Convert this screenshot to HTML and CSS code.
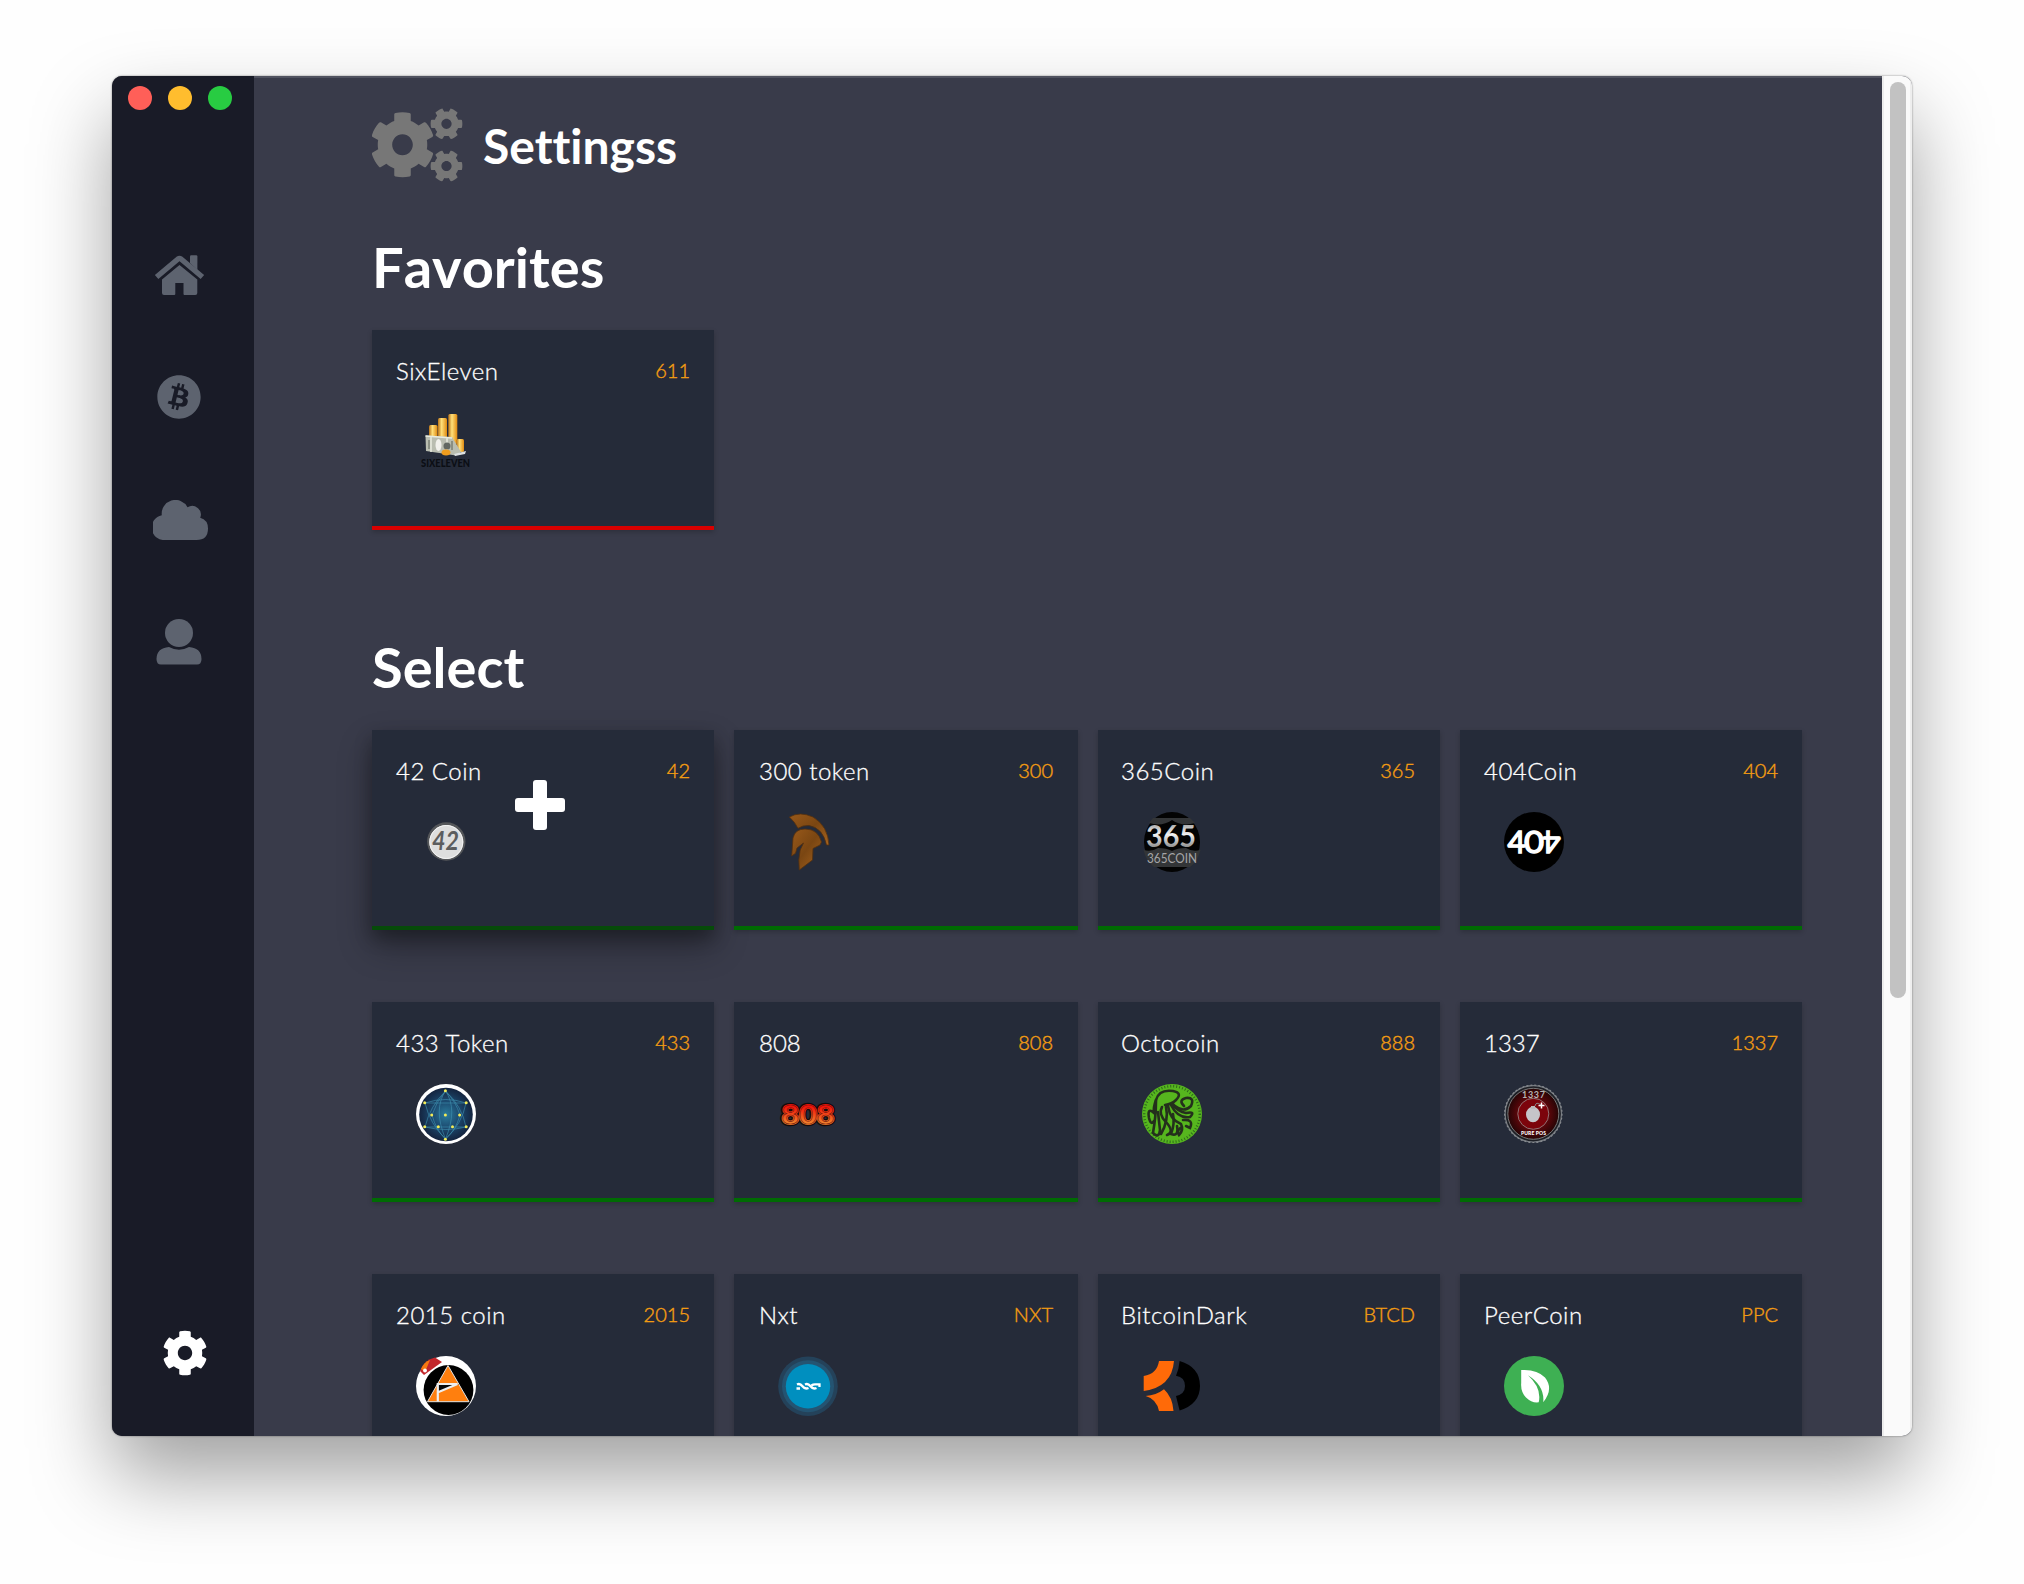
FILE: index.html
```html
<!DOCTYPE html>
<html lang="en">
<head>
<meta charset="utf-8">
<title>Settings</title>
<link rel="stylesheet" href="styles.css">
</head>
<body>
<svg class="defs" width="0" height="0">
  <defs>
    <path id="cog" d="M487.4 315.7l-42.6-24.6c4.3-23.2 4.3-47 0-70.2l42.6-24.6c4.9-2.8 7.1-8.6 5.5-14-11.1-35.6-30-67.8-54.7-94.6-3.8-4.1-10-5.1-14.8-2.3L380.8 110c-17.9-15.4-38.5-27.3-60.8-35.1V25.8c0-5.6-3.9-10.5-9.4-11.7-36.7-8.2-74.3-7.8-109.2 0-5.5 1.2-9.4 6.1-9.4 11.7V75c-22.2 7.9-42.8 19.8-60.8 35.1L88.7 85.5c-4.9-2.8-11-1.9-14.8 2.3-24.7 26.7-43.6 58.9-54.7 94.6-1.7 5.4.6 11.2 5.5 14L67.3 221c-4.3 23.2-4.3 47 0 70.2l-42.6 24.6c-4.9 2.8-7.1 8.6-5.5 14 11.1 35.6 30 67.8 54.7 94.6 3.8 4.1 10 5.1 14.8 2.3l42.6-24.6c17.9 15.4 38.5 27.3 60.8 35.1v49.2c0 5.6 3.9 10.5 9.4 11.7 36.7 8.2 74.3 7.8 109.2 0 5.5-1.2 9.4-6.1 9.4-11.7v-49.2c22.2-7.9 42.8-19.8 60.8-35.1l42.6 24.6c4.9 2.8 11 1.9 14.8-2.3 24.7-26.7 43.6-58.9 54.7-94.6 1.5-5.5-.7-11.3-5.6-14.1zM256 336c-44.1 0-80-35.9-80-80s35.9-80 80-80 80 35.9 80 80-35.9 80-80 80z"/>
    <linearGradient id="gold"><stop offset="0" stop-color="#b97216"/><stop offset=".4" stop-color="#ffe07a"/><stop offset="1" stop-color="#e08a10"/></linearGradient>
    <linearGradient id="silver" x1="0" y1="0" x2="0" y2="1"><stop offset="0" stop-color="#777"/><stop offset=".5" stop-color="#f2f2f2"/><stop offset="1" stop-color="#666"/></linearGradient>
    <linearGradient id="fire" x1="0" y1="0" x2="0" y2="1"><stop offset=".3" stop-color="#f41008"/><stop offset=".8" stop-color="#f0802c"/></linearGradient>
    <linearGradient id="bronze" x1="0" y1="0" x2="1" y2="1"><stop offset="0" stop-color="#99591a"/><stop offset=".5" stop-color="#7a4612"/><stop offset="1" stop-color="#a7641f"/></linearGradient>
    <radialGradient id="deep"><stop offset="0" stop-color="#2b7c9c"/><stop offset=".5" stop-color="#1c4a70"/><stop offset="1" stop-color="#14243f"/></radialGradient>
    <radialGradient id="ruby"><stop offset="0" stop-color="#b0000a"/><stop offset=".6" stop-color="#5c060a"/><stop offset="1" stop-color="#260506"/></radialGradient>
  </defs>
</svg>
<div class="window">
  <nav class="sidebar">
    <div class="lights"><i class="light red"></i><i class="light amber"></i><i class="light lime"></i></div>
    <svg class="nav nav-home" width="52" height="42" viewBox="0 0 52 42">
      <path d="M36 8V1.500q0-1.200 1.200-1.200h5q1.200 0 1.200 1.200V15z"/>
      <path d="M2.600 22L24 4Q25.500 3 27 4L48.400 22" fill="none" stroke="#5d636f" stroke-width="5.400" stroke-linejoin="round"/>
      <path d="M8 24.500L25.500 10 43.300 24.500V38q0 2-2 2H30.500q-1 0-1-1V28H21.300V39q0 1-1 1H10q-2 0-2-2z"/>
    </svg>
    <svg class="nav nav-coin" width="44" height="44" viewBox="4 4 504 504"><path d="M504 256c0 136.967-111.033 248-248 248S8 392.967 8 256 119.033 8 256 8s248 111.033 248 248zm-141.651-35.33c4.937-32.999-20.191-50.739-54.55-62.573l11.146-44.702-27.213-6.781-10.851 43.524c-7.154-1.783-14.502-3.464-21.803-5.13l10.929-43.81-27.198-6.781-11.153 44.686c-5.922-1.349-11.735-2.682-17.377-4.084l.031-.14-37.53-9.37-7.239 29.062s20.191 4.627 19.765 4.913c11.022 2.751 13.014 10.044 12.68 15.825l-12.696 50.925c.76.194 1.744.473 2.829.907-.907-.225-1.876-.473-2.876-.713l-17.796 71.338c-1.349 3.348-4.767 8.37-12.471 6.464.271.395-19.78-4.937-19.78-4.937l-13.51 31.147 35.414 8.827c6.588 1.651 13.045 3.379 19.4 5.006l-11.262 45.213 27.182 6.781 11.153-44.733a1038.209 1038.209 0 0 0 21.687 5.627l-11.115 44.523 27.213 6.781 11.262-45.128c46.404 8.781 81.299 5.239 95.986-36.727 11.834-33.79-.589-53.281-25.004-65.991 17.78-4.098 31.174-15.792 34.747-39.949zm-62.177 87.179c-8.41 33.79-65.308 15.523-83.755 10.943l14.944-59.899c18.446 4.603 77.6 13.717 68.811 48.956zm8.417-87.667c-7.673 30.736-55.031 15.12-70.393 11.292l13.548-54.327c15.363 3.828 64.836 10.973 56.845 43.035z"/></svg>
    <svg class="nav nav-cloud" width="56" height="40" viewBox="0 0 56 40"><path d="M12.500 40A12.500 12.500 0 0 1 8.800 15.300A13.700 13.700 0 0 1 34.500 7.200A8.700 8.700 0 0 1 47.200 17.800Q55 20 55 28.500Q55 40 43.500 40z"/></svg>
    <svg class="nav nav-user" width="46" height="46" viewBox="0 0 46 46"><circle cx="23" cy="14" r="14"/><path d="M13 28Q23 33.500 33 28Q45.500 29 45.500 40Q45.500 45.500 41 45.500H5Q.5 45.500.5 40Q.5 29 13 28z"/></svg>
    <svg class="nav nav-settings" width="46" height="46" viewBox="0 0 512 512"><use href="#cog"/></svg>
  </nav>
  <main class="content">
    <header class="title">
      <svg width="92" height="76" viewBox="0 0 92 76" fill="#777">
        <use href="#cog" transform="translate(30.5 36.700) scale(.129 .131) translate(-256 -256)"/>
        <use href="#cog" transform="translate(74.500 15.800) scale(.064) rotate(90) translate(-256 -256)"/>
        <use href="#cog" transform="translate(74.500 58) scale(.064) rotate(90) translate(-256 -256)"/>
      </svg>
      <h1>Settingss</h1>
    </header>
    <h2>Favorites</h2>
    <section class="grid favorites">
      <article class="card favorite">
        <div class="head"><span class="name">SixEleven</span><span class="code">611</span></div>
        <svg class="logo" viewBox="0 0 60 60">
          <g fill="url(#gold)"><rect x="13" y="13" width="8.500" height="15" rx="1.500"/><rect x="22" y="6" width="9" height="22" rx="1.500"/><rect x="32.300" y="2" width="9" height="30" rx="1.500"/><rect x="40.500" y="27" width="7.500" height="13" rx="1.500"/></g>
          <path d="M9.500 23.500L36 25 45 40 40 43.500 30 42 10 39z" fill="#b9bdb0"/><path d="M9.500 24L36 26M15 25v15M31 26v15" stroke="#e9ecdf" stroke-width="1.500"/><ellipse cx="22.500" cy="33" rx="3" ry="6" fill="#f1f1ec"/><circle cx="31" cy="34" r="3.500" fill="#626862"/>
          <path d="M13 28v9M36 29v9" stroke="#7b8074" stroke-width="1.500"/><ellipse cx="30" cy="40.500" rx="4.500" ry="3" fill="#ef9d1e"/><path d="M38 42l12-3-1 3-10 2z" fill="#dde1e2"/>
          <text x="5" y="55" font-family="Lato" font-weight="900" font-size="11" textLength="49" lengthAdjust="spacingAndGlyphs" fill="#0b0e14">SIXELEVEN</text>
        </svg>
      </article>
    </section>
    <h2>Select</h2>
    <section class="grid">
      <article class="card active">
        <div class="head"><span class="name">42 Coin</span><span class="code">42</span></div>
        <svg class="logo" viewBox="0 0 60 60"><circle cx="30.300" cy="29.500" r="19.200" fill="#55575a"/><circle cx="30.300" cy="30" r="17" fill="#dedede"/><circle cx="30.300" cy="30" r="16.500" fill="none" stroke="#f5f5f5"/><text x="16" y="38" font-family="Lato" font-weight="700" font-style="italic" font-size="26" textLength="27" lengthAdjust="spacingAndGlyphs" fill="#5c5d5e">42</text></svg>
        <svg class="plus" width="50" height="50" viewBox="0 0 50 50"><rect x="18" width="14" height="50" rx="3"/><rect y="18" width="50" height="14" rx="3"/></svg>
      </article>
      <article class="card">
        <div class="head"><span class="name">300 token</span><span class="code">300</span></div>
        <svg class="logo" viewBox="0 0 60 60"><g fill="url(#bronze)" stroke="#54300e" stroke-width=".8"><path d="M11.400 5Q22-1 35 5Q50 14 51 33L48.500 33Q45 16 31 13.500Q25 13 20 16.300Q17 10 11.400 5z"/><path d="M15 26Q17 17 27 17Q40 17 43.500 30L42 33 35 36.500 34.500 48 21.300 58 20.800 48 22.200 38 25.500 31 19 36 17.500 41.300 13.700 44z"/></g></svg>
      </article>
      <article class="card">
        <div class="head"><span class="name">365Coin</span><span class="code">365</span></div>
        <svg class="logo" viewBox="0 0 60 60"><ellipse cx="30" cy="30" rx="28" ry="30" fill="#030303"/><path d="M11 6H48L53 11Q40 15 30 8Q20 15 7 11zM1.500 38Q10 40 16 36Q25 36 30 39Q35 36 44 36Q50 40 58.500 38Q56 49 48 55H12Q4 49 1.500 38z" fill="#333537"/><text x="4" y="34.500" font-family="Lato" font-weight="700" font-size="30" textLength="50" lengthAdjust="spacingAndGlyphs" fill="url(#silver)">365</text><text x="5" y="50.500" font-family="Lato" font-weight="400" font-size="13" textLength="50" lengthAdjust="spacingAndGlyphs" fill="#a5a5a7">365COIN</text></svg>
      </article>
      <article class="card">
        <div class="head"><span class="name">404Coin</span><span class="code">404</span></div>
        <svg class="logo" viewBox="0 0 60 60"><circle cx="30" cy="30" r="30"/><g fill="#fff" stroke="#fff" stroke-width="1.400" font-family="Lato" font-weight="400" font-size="31"><text x="3.500" y="41">4</text><text x="20" y="41" textLength="20" lengthAdjust="spacingAndGlyphs">0</text><text transform="translate(56.500 19) rotate(180)">4</text></g></svg>
      </article>
      <article class="card">
        <div class="head"><span class="name">433 Token</span><span class="code">433</span></div>
        <svg class="logo" viewBox="0 0 60 60"><circle cx="30" cy="30" r="30" fill="#fff"/><circle cx="30" cy="30.500" r="26.800" fill="url(#deep)"/><g fill="none" stroke="#3d8fae" stroke-width=".8" stroke-opacity=".8"><path d="M29.500 7Q42 25 29.500 55Q17 25 29.500 7M9 19H50M9 43H50M9 19Q30 12 50 19M9 43Q30 48 50 43M9 19Q14 40 29.500 55Q46 40 50 19M9 43Q14 22 29.500 7Q46 22 50 43M16 31Q20 18 29.500 7Q40 18 44 31Q40 46 29.500 55Q20 46 16 31"/></g><g fill="#f3ec58"><circle cx="29.400" cy="6.700" r="1.500"/><circle cx="8.700" cy="18.700" r="1.500"/><circle cx="50.200" cy="18.700" r="1.500"/><circle cx="15.700" cy="31" r="1.500"/><circle cx="29.400" cy="31" r="1.500"/><circle cx="43.600" cy="31" r="1.500"/><circle cx="8.700" cy="42.700" r="1.500"/><circle cx="22.300" cy="42.700" r="1.500"/><circle cx="36.500" cy="42.700" r="1.500"/><circle cx="50.200" cy="42.700" r="1.500"/><circle cx="29.400" cy="55.300" r="1.500"/></g></svg>
      </article>
      <article class="card">
        <div class="head"><span class="name digits">808</span><span class="code">808</span></div>
        <svg class="logo" viewBox="0 0 60 60"><g font-family="Lato" font-weight="700" font-size="27"><text x="3.500" y="39.600" textLength="53" lengthAdjust="spacingAndGlyphs" fill="#120a0c" stroke="#120a0c" stroke-width="4.500">808</text><text x="3.500" y="39.600" textLength="53" lengthAdjust="spacingAndGlyphs" fill="url(#fire)" stroke="url(#fire)" stroke-width="2">808</text><text x="3.500" y="39.600" textLength="53" lengthAdjust="spacingAndGlyphs" fill="none" stroke="#7c1a0c" stroke-width=".6">808</text></g></svg>
      </article>
      <article class="card">
        <div class="head"><span class="name">Octocoin</span><span class="code">888</span></div>
        <svg class="logo" viewBox="0 0 60 60"><circle cx="30" cy="30" r="30" fill="#56b61e"/><circle cx="30" cy="30" r="27.800" fill="none" stroke="#2e6a1c" stroke-width="2.500" stroke-dasharray="1 2"/><g fill="none" stroke="#24301c" stroke-width="2.600" stroke-linecap="round"><path d="M14 16Q17 5 31 7Q41 9 34 16Q30 20 23 21"/><path d="M14 16Q11 24 12 29Q5 23 7 34Q9 42 12 37"/><path d="M14 17Q14 32 11 49Q17 55 18 46L16 28"/><path d="M20 23Q16 30 24 38Q33 48 25 51"/><path d="M24 23Q27 36 19 50"/><path d="M26 22Q28 36 39 40Q42 46 37 51Q34 46 40 43"/><path d="M29 21Q36 35 48 33Q54 27 44 29Q36 28 31 20"/><path d="M33 22Q42 29 49 22Q53 13 44 14Q36 16 42 22"/><path d="M31 30Q33 40 29 50Q37 53 35 42M41 36Q52 35 48 44L44 42"/></g></svg>
      </article>
      <article class="card">
        <div class="head"><span class="name digits">1337</span><span class="code">1337</span></div>
        <svg class="logo" viewBox="0 0 60 60"><circle cx="29.300" cy="29.800" r="28.200" fill="#1d1f25" stroke="#777c82" stroke-width="1.200"/><circle cx="29.300" cy="29.800" r="25.500" fill="url(#ruby)" stroke="#777"/><circle cx="29.300" cy="29.800" r="28.700" fill="none" stroke="#85888d" stroke-width="1.200" stroke-dasharray="2 2"/><circle cx="29.300" cy="29.800" r="15.500" fill="#7c040b" stroke="#8f7273"/><ellipse cx="29" cy="30.500" rx="7" ry="7.800" fill="#c5c5c9"/><path d="M27 25v-3h4v3z" fill="#bbb"/><path d="M31 22q1-5 6-1" fill="none" stroke="#888"/><path d="M37.500 18.500v6M34.500 21.500h6" stroke="#fff" stroke-width="1.500"/><text x="18" y="13.500" font-family="Lato" font-weight="700" font-size="9" textLength="23" fill="#b5b5b5">1337</text><text x="17" y="51" font-family="Lato" font-weight="900" font-size="5" textLength="25" fill="#fff">PURE POS</text></svg>
      </article>
      <article class="card">
        <div class="head"><span class="name">2015 coin</span><span class="code">2015</span></div>
        <svg class="logo" viewBox="0 0 60 60"><circle cx="30" cy="30" r="30" fill="#fff"/><circle cx="32.500" cy="34" r="24.900"/><path d="M32 9.500L53 45.700H11.500z" fill="#ff7f0e" stroke="#e3e3e3"/><path d="M22 28H43L22 36z" fill="#080808"/><path d="M21.800 45.500V28H41.500L22 36.300" fill="none" stroke="#eee" stroke-width="2.200"/><path d="M4 15Q8 4 19 1.500L26 6 8 19z" fill="#c3262b"/><path d="M5 13Q8 6 14 4L9 16z" fill="#f57a10"/><circle cx="9" cy="14.500" r="1.900" fill="#fff"/></svg>
      </article>
      <article class="card">
        <div class="head"><span class="name">Nxt</span><span class="code">NXT</span></div>
        <svg class="logo" viewBox="0 0 60 60"><circle cx="30" cy="30.200" r="29.800" fill="#24425a"/><circle cx="30" cy="30.200" r="26" fill="#245472"/><circle cx="30" cy="30.200" r="22.200" fill="#008fbf"/><path d="M19 28.500Q22 27 24.500 30.300T30.500 32M27 28.500Q30 27 32.500 30.300T38.500 32M18.500 32.500H22M33.500 29.500Q35 28.300 37 28.300H41.500V31" fill="none" stroke="#fff" stroke-width="2.300"/></svg>
      </article>
      <article class="card">
        <div class="head"><span class="name">BitcoinDark</span><span class="code">BTCD</span></div>
        <svg class="logo" viewBox="0 0 60 60"><path d="M17 5H32Q30 31 1.700 35V20Q15 18 17 5zM3.700 40Q14 39.500 22 33.300Q30.500 41 31.500 55H17Q14.500 43 3.700 40z" fill="#ff6a08"/><path d="M37.600 5Q58 11 58 30Q58 48 37.600 54.500L34 40Q43 38 43 30Q43 21 34 19.700Q37 13 37.600 5z"/></svg>
      </article>
      <article class="card">
        <div class="head"><span class="name">PeerCoin</span><span class="code">PPC</span></div>
        <svg class="logo" viewBox="0 0 60 60"><circle cx="30" cy="30" r="30" fill="#3eb053"/><path d="M17.200 14Q33 13 41 21.500Q50 33 39.200 46.300Q41 30 24 19.200Q38 32 34.700 46.300Q28 47.300 22 41.500Q16.500 35.500 17.200 27z" fill="#fff"/></svg>
      </article>
    </section>
  </main>
  <div class="scrollbar"><div class="thumb"></div></div>
</div>
</body>
</html>
```
FILE: styles.css
```css
* { box-sizing: border-box; }
body {
  margin: 0;
  height: 1584px;
  padding: 76px 112px 148px;
  background: #fefefe;
  font-family: Lato, "Open Sans", sans-serif;
  font-variant-ligatures: none;
  overflow: hidden;
}
.defs { display: block; height: 0; }
.window {
  display: flex;
  height: 1360px;
  border-radius: 10px;
  overflow: hidden;
  background: #393b4a;
  box-shadow: 0 0 2px rgba(0, 0, 0, .5), 0 40px 80px rgba(0, 0, 0, .37);
}
.sidebar {
  width: 142px;
  background: #191b27;
  display: flex;
  flex-direction: column;
  align-items: flex-start;
  padding-bottom: 60px;
}
.lights { display: flex; gap: 16px; padding: 10px 0 0 16px; height: 178px; }
.light { width: 24px; height: 24px; border-radius: 50%; }
.red { background: #ff5f58; }
.amber { background: #ffbd2e; }
.lime { background: #28cc42; }
.nav { fill: #5d636f; display: block; }
.nav-home { margin: 1px 0 0 42px; }
.nav-coin { margin: 78px 0 0 45px; }
.nav-cloud { margin: 81px 0 0 41px; }
.nav-user { margin: 79px 0 0 44px; }
.nav-settings { margin: auto 0 0 50px; fill: #fff; }
.content { flex: 1; padding: 30px 80px 0 118px; overflow: hidden; border-top: 2px solid #50525f; }
.title { display: flex; gap: 19px; height: 76px; }
h1, h2 { margin: 0; color: #fff; font-weight: 700; }
h1 { font-size: 48px; line-height: 76px; }
h2 { font-size: 56px; line-height: 68px; padding: 49px 0 29px; font-kerning: none; }
.grid { display: grid; grid-template-columns: 342px 344px 342px 342px; gap: 72px 20px; }
.favorites { padding-bottom: 54px; }
.card {
  position: relative;
  height: 200px;
  padding: 23px 24px 0;
  background: #252b39;
  border-bottom: 4px solid #006b03;
  box-shadow: 0 2px 5px rgba(0, 0, 0, .2);
}
.card.favorite { border-bottom-color: #d80000; }
.card.active { border-bottom-color: #064b09; box-shadow: 0 16px 32px rgba(0, 0, 0, .32), 0 8px 16px rgba(0, 0, 0, .25); }
.head { display: flex; justify-content: space-between; height: 59px; }
.card:nth-child(4n+2) .head { margin: 0 1px; }
.card:nth-child(4n+3) .head { margin: 0 1px 0 -1px; }
.name { font-size: 24px; line-height: 36px; font-weight: 300; color: #fff; letter-spacing: .5px; -webkit-text-stroke: .3px #fff; }
.name.digits { letter-spacing: 0; }
.code { font-size: 20px; line-height: 34px; font-weight: 300; color: #f39c12; -webkit-text-stroke: .4px #f39c12; }
.logo { display: block; width: 60px; height: 60px; margin-left: 20px; overflow: visible; }
.plus { position: absolute; left: 143px; top: 50px; fill: #fff; }
.scrollbar { width: 30px; background: #fafafa; border-left: 2px solid #ececec; border-right: 2px solid #eee; padding: 6px 4px 0 6px; }
.thumb { height: 916px; border-radius: 8px; background: #c2c2c2; }
```
